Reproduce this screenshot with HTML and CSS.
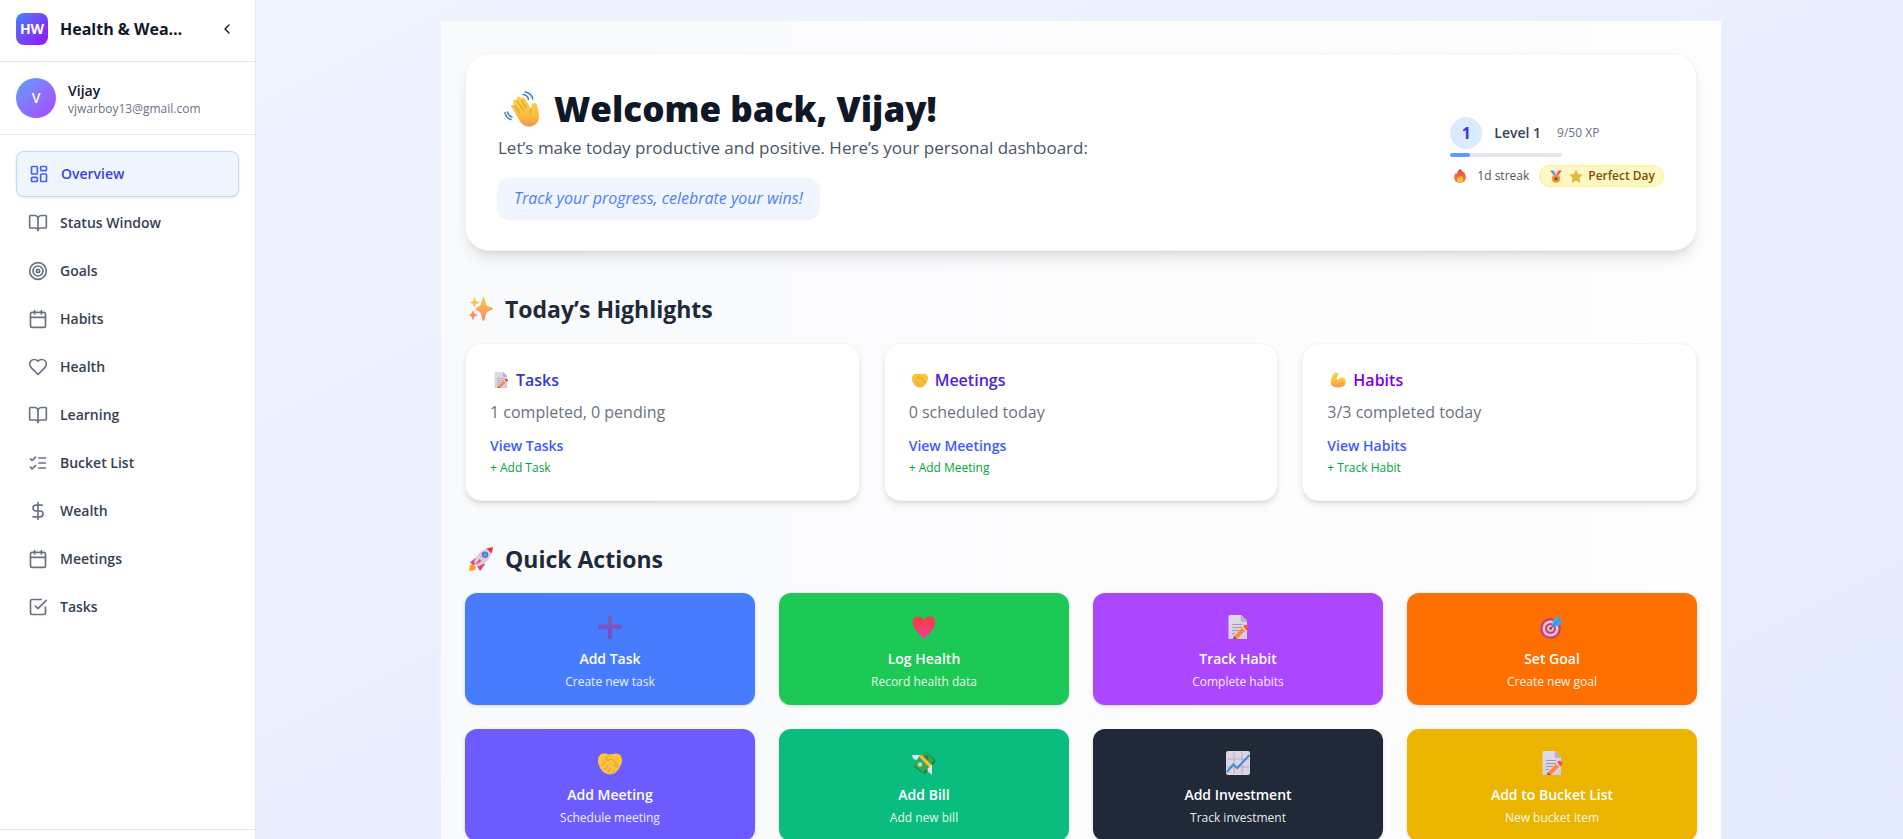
FILE: index.html
```
<!DOCTYPE html>
<html lang="en">
<head>
  <meta charset="UTF-8">
  <meta name="viewport" content="width=device-width, initial-scale=1.0">
  <title>Health &amp; Wealth</title>
  <link rel="stylesheet" href="styles.css">
</head>
<body>
  <!-- Shared icons -->
  <svg class="sprite" aria-hidden="true">
    <defs>
      <linearGradient id="gold" x1="0" y1="0" x2="0" y2="1">
        <stop offset="0" stop-color="#ffd24a"/>
        <stop offset="0.65" stop-color="#f9bd3c"/>
        <stop offset="1" stop-color="#f0935a"/>
      </linearGradient>
      <linearGradient id="shake" x1="0" y1="0" x2="0" y2="1">
        <stop offset="0" stop-color="#ffc72e"/>
        <stop offset="1" stop-color="#f5bd55"/>
      </linearGradient>
      <linearGradient id="spark" x1="0" y1="0" x2="0" y2="1">
        <stop offset="0" stop-color="#fbc94a"/>
        <stop offset="1" stop-color="#fa8a6c"/>
      </linearGradient>
      <linearGradient id="paper" x1="0" y1="0" x2="0" y2="1">
        <stop offset="0" stop-color="#e0dbe6"/>
        <stop offset="1" stop-color="#d9cbe0"/>
      </linearGradient>
      <linearGradient id="love" x1="0" y1="0" x2="0" y2="1">
        <stop offset="0" stop-color="#f2403f"/>
        <stop offset="0.5" stop-color="#f63d68"/>
        <stop offset="1" stop-color="#ee3fae"/>
      </linearGradient>
      <linearGradient id="cross" x1="0" y1="0" x2="0" y2="1">
        <stop offset="0" stop-color="#7663b4"/>
        <stop offset="1" stop-color="#7b46c4"/>
      </linearGradient>
      <linearGradient id="flame" x1="0" y1="0" x2="0" y2="1">
        <stop offset="0" stop-color="#e2483f"/>
        <stop offset="1" stop-color="#fb8a3c"/>
      </linearGradient>
    </defs>

    <symbol id="i-overview" viewBox="0 0 24 24"><rect width="7" height="9" x="3" y="3" rx="1"/><rect width="7" height="5" x="14" y="3" rx="1"/><rect width="7" height="9" x="14" y="12" rx="1"/><rect width="7" height="5" x="3" y="16" rx="1"/></symbol>
    <symbol id="i-book" viewBox="0 0 24 24"><path d="M12 7v14"/><path d="M3 18a1 1 0 0 1-1-1V4a1 1 0 0 1 1-1h5a4 4 0 0 1 4 4 4 4 0 0 1 4-4h5a1 1 0 0 1 1 1v13a1 1 0 0 1-1 1h-6a3 3 0 0 0-3 3 3 3 0 0 0-3-3z"/></symbol>
    <symbol id="i-target" viewBox="0 0 24 24"><circle cx="12" cy="12" r="10"/><circle cx="12" cy="12" r="6"/><circle cx="12" cy="12" r="2"/></symbol>
    <symbol id="i-calendar" viewBox="0 0 24 24"><path d="M8 2v4"/><path d="M16 2v4"/><rect width="18" height="18" x="3" y="4" rx="2"/><path d="M3 10h18"/></symbol>
    <symbol id="i-heart" viewBox="0 0 24 24"><path d="M19 14c1.49-1.46 3-3.21 3-5.5A5.5 5.5 0 0 0 16.5 3c-1.76 0-3 .5-4.5 2-1.5-1.5-2.74-2-4.5-2A5.5 5.5 0 0 0 2 8.5c0 2.3 1.5 4.05 3 5.5l7 7Z"/></symbol>
    <symbol id="i-checks" viewBox="0 0 24 24"><path d="m3 17 2 2 4-4"/><path d="m3 7 2 2 4-4"/><path d="M13 6h8"/><path d="M13 12h8"/><path d="M13 18h8"/></symbol>
    <symbol id="i-dollar" viewBox="0 0 24 24"><path d="M12 2v20"/><path d="M17 5H9.500a3.500 3.500 0 0 0 0 7h5a3.500 3.500 0 0 1 0 7H6"/></symbol>
    <symbol id="i-task" viewBox="0 0 24 24"><path d="m9 11 3 3L22 4"/><path d="M21 12v7a2 2 0 0 1-2 2H5a2 2 0 0 1-2-2V5a2 2 0 0 1 2-2h11"/></symbol>
    <symbol id="i-left" viewBox="0 0 24 24"><path d="m15 18-6-6 6-6"/></symbol>

    <symbol id="e-wave" viewBox="0 0 36 36">
      <g fill="none" stroke="#3f7fc4" stroke-width="1.500" stroke-linecap="round">
        <path d="M19 3.500c3 .3 5 2.200 5.500 5"/><path d="M21 1c4.200.6 7 3.200 7.800 7"/>
        <path d="M3.500 21c.5 2.600 2 4.400 4.500 5"/><path d="M1 21.500c.4 3.600 2.600 6 6 7"/>
      </g>
      <path fill="url(#gold)" d="M10 20 7.500 16.500c-1.300-2 1.200-3.800 2.700-2.200L9.300 11c-.6-2.500 2.200-3.600 3.400-1.500L12.800 8c-.3-2.700 2.600-3.400 3.800-1.300l.8 1.200c.5-2.200 3-2.200 4 0L27 18l.6-3.500c.4-3 4.600-3.400 5.300-.6.800 3.500 2.300 7.500 2.100 12-.2 5.500-4.500 9.600-10 9.600-4.500 0-7.500-2.500-9.500-6z"/>
      <path fill="none" stroke="#dc9434" stroke-width="1" stroke-linecap="round" d="m10.500 14.500 5 7M12.800 9.500l6.200 9.500M17.400 8.500l5 8.500M27 18l-.5 4"/>
    </symbol>
    <symbol id="e-sparkles" viewBox="0 0 24 24">
      <path fill="url(#spark)" d="M14.500 0c1.400 0 2 7.400 3.500 8.600s6 1.700 6 3.200-4.500 1.900-6 3.400-2.100 8.800-3.500 8.800-2-7.300-3.500-8.800-4.500-1.900-4.500-3.200 3-2 4.500-3.200S13.100 0 14.500 0z"/>
      <path fill="#fbbd55" d="M5.500 0 6.900 3.900 11 5.500 6.900 7.100 5.500 11 4.100 7.100 1 5.500l3.100-1.600z"/>
      <path fill="#fa8d68" d="m4 13 1.500 3.500L9 18l-3.500 1.500L4 23.500l-1.500-4L0 18l2.500-1.500z"/>
    </symbol>
    <symbol id="e-memo" viewBox="0 0 24 24">
      <path fill="url(#paper)" d="M2.500 1.500Q2.500 0 4 0h11L21 5.500V24H2.500z"/>
      <path fill="#b9b0c5" d="M15 0 21 5.500V7h-5L14.500 5z"/>
      <path stroke="#a59bb0" stroke-width="1" d="M6 9.500h10M6 12.500h10M6 15.500h7M6 18.500h3"/>
      <path fill="#ff8740" d="m8 21.500 9-9.800 3.200 3L11 24H8z"/>
      <path fill="#e5dde6" d="m15.800 12.700 1.800-2 3.400 3-1.800 2z"/>
      <path fill="#f0593e" d="m17.200 11.200 1.300-1.500q4 0 4 3.300l-2 2.500z"/>
      <path fill="#705866" d="M7 24l1-3 2.500 3z"/>
    </symbol>
    <symbol id="e-handshake" viewBox="0 0 24 24">
      <path fill="url(#shake)" d="M0 10C0 5 2.500 2.500 6 2.500c2.500 0 4 .8 6 .8s4-1 6.500-.8C22.500 2.800 24 6 24 9.500c0 3-1.300 4.700-2.500 7-2 4-5.500 7-9.500 7s-8-3-9.500-6C1.300 15 0 13 0 10z"/>
      <path fill="none" stroke="#d5962a" stroke-width="1" stroke-linecap="round" d="M12 3.300C9.500 4 8 7 8.500 8.700c1.500 1.500 4-.7 5.500-.4l7 7M3.500 15l3-3M6.500 18.500l3.500-4M10 21l3-3.500M14 22l1.500-2M16 13.500l3.500 3.500"/>
    </symbol>
    <symbol id="e-muscle" viewBox="0 0 24 24">
      <path fill="url(#gold)" d="M7.500 1c2-1 5 .3 5.200 2.300.2 2-2 3.700-3 4.200l1 5.500c3-4.500 7.500-6.500 10.500-3.500 3.500 3.500 3 9.500-.5 11.500-5 3-13.500 2.500-17 0C0 19 1 13.500 2.300 9.500 3.200 6 5 2 7.500 1z"/>
      <path fill="none" stroke="#dc9434" stroke-width="1" stroke-linecap="round" d="M9.700 7.500 7.500 6M10.700 13c-.8 1.500-2.300 2.500-4 2.300M14 17c2.500 1.500 5 1 6.500-1"/>
    </symbol>
    <symbol id="e-rocket" viewBox="0 0 24 24">
      <path fill="#fb9c2f" d="m0 24 1-6 3-1 3 3-1 3z"/>
      <path fill="#ea3e70" d="M1 15.500 7.500 10l4.500 3.500L4.500 18zM8 19l5-5 3 3.500-5 6.500z"/>
      <path fill="#d8cde2" d="M5 15.500C6.500 8.500 12 3 19 1l4 4c-2 7-7.500 12.500-14 14.500z"/>
      <path fill="#e23c43" d="M17.500 1.500Q23 0 24 .2q.2 1-1.500 6.300z"/>
      <circle cx="16" cy="7.700" r="3.300" fill="#726caa"/>
      <circle cx="16" cy="7.700" r="2.300" fill="#4e9be8"/>
      <path fill="#f1417c" d="m5.500 18.500 5-6.500 2 2z"/>
    </symbol>
    <symbol id="e-plus" viewBox="0 0 24 24">
      <path fill="url(#cross)" d="M9.800 1.800Q9.800 0 12 0t2.200 1.800v8h8q1.800 0 1.800 2.200t-1.800 2.200h-8v8Q14.200 24 12 24t-2.200-1.800v-8h-8Q0 14.200 0 12t1.800-2.200h8z"/>
      <path fill="none" stroke="#8d4fe0" stroke-width="1" d="M1 13.600h8.800M14.200 13.600H23"/>
    </symbol>
    <symbol id="e-heart" viewBox="0 0 24 24">
      <path fill="url(#love)" d="M12 23.500Q8 21 4 15.500C-1 9-.5 2 5.500 1.500 8.500 1.300 11 3 12 5c1-2 3.500-3.700 6.500-3.500C24.500 2 25 9 20 15.500Q16 21 12 23.500z"/>
    </symbol>
    <symbol id="e-dart" viewBox="0 0 24 24">
      <circle cx="10.500" cy="13.500" r="10.500" fill="#cf3f6e"/>
      <circle cx="10.500" cy="13.500" r="8" fill="#dccbe0"/>
      <circle cx="10.500" cy="13.500" r="5.500" fill="#db3f68"/>
      <circle cx="10.500" cy="13.500" r="3.200" fill="#dccbe0"/>
      <circle cx="10.500" cy="13.500" r="1.500" fill="#c53f66"/>
      <path stroke="#2b6eb8" stroke-width="1.300" d="m10.500 13.500 5-5"/>
      <path fill="#42a5ec" d="m12 11 1-5.500L18 0l1.500 4.500L24 6l-5.500 5z"/>
      <path stroke="#2b83d0" stroke-width="1" d="m13.500 10 6-5.500"/>
    </symbol>
    <symbol id="e-money" viewBox="0 0 24 24">
      <path fill="#e4e2ea" d="M0 4.500 8 4 4.500 9 1.500 8zM14 18l6-5v10.500L17.500 22z"/>
      <path fill="#1b7a3a" d="m1.500 15.500 12-15.500L24 10 12.500 23z"/>
      <path fill="#35aa52" d="m1.500 14 12-14L22 9.500 11.500 21.500z"/>
      <circle cx="14" cy="6.500" r="2.500" fill="#1d8c42"/>
      <circle cx="8" cy="13.500" r="2.300" fill="#b7e2bc"/>
      <path fill="#fbbd35" d="m7.500 6 2-2.500L20 14.500l-2 2.500z"/>
      <path fill="#e4e2ea" d="M0 4.500 8 4 4.500 9zM15 18l5-5v10.500z"/>
    </symbol>
    <symbol id="e-chart" viewBox="0 0 24 24">
      <rect width="24" height="24" rx="2" fill="#ded3e4"/>
      <path stroke="#b7acc3" stroke-width="1" d="M8 1v22M16 1v22M1 8h22M1 16h22"/>
      <path fill="none" stroke="#3d8fd9" stroke-width="2" d="m.8 21 6.500-7.500 4 3.500L23.500 4"/>
    </symbol>
    <symbol id="e-fire" viewBox="0 0 24 24">
      <path fill="url(#flame)" d="M12 0c3 1.500 4.500 3.500 5 6l1.500-1.500C21 8 22.500 12 22 16c-.6 5-4.500 8-10 8S2.500 21 2 16c-.3-3.500 1-6.500 3-9l1.500 2C7 5 9 2 12 0z"/>
      <path fill="#ffc23d" d="M13 11c3 2.500 5 5 4.500 8-.4 2.600-2.500 4-5.200 4S7.500 21.500 7.200 19c-.2-2 .8-3.500 2-4.700l1.500 1.500C11 14 11.700 12.500 13 11z"/>
    </symbol>
    <symbol id="e-medal" viewBox="0 0 24 24">
      <path fill="#4d8fe0" d="M1 1h6l6 9-3 2z"/><path fill="#e64677" d="M23 1h-6l-6 9 3 2z"/><path fill="#d8cfe5" d="M7 1h3l3.500 6-1.500 2zM14 1h3l-5 8-1.500-2z"/>
      <circle cx="12" cy="16" r="8" fill="#f09a3e"/><circle cx="12" cy="16" r="4" fill="#c8702d"/><circle cx="12" cy="16" r="1.800" fill="#6b3a1d"/>
    </symbol>
    <symbol id="e-star" viewBox="0 0 24 24">
      <path fill="#e3b93a" stroke="#e3b93a" stroke-width="2" stroke-linejoin="round" d="m12 1.500 3.300 6.800 7.200 1-5.300 5.200 1.300 7.500-6.500-3.500L5.500 22l1.300-7.500L1.500 9.300l7.200-1z"/>
    </symbol>
  </svg>

  <div class="layout">
    <aside class="sidebar">
      <div class="brand">
        <div class="logo">HW</div>
        <div class="brand-name">Health &amp; Wea…</div>
        <button class="collapse" type="button" aria-label="Collapse sidebar"><svg class="icon"><use href="#i-left"/></svg></button>
      </div>

      <div class="profile">
        <div class="avatar">V</div>
        <div>
          <div class="profile-name">Vijay</div>
          <div class="profile-email">vjwarboy13@gmail.com</div>
        </div>
      </div>

      <nav class="nav">
        <a class="nav-link active" href="#overview"><svg class="icon"><use href="#i-overview"/></svg>Overview</a>
        <a class="nav-link" href="#status"><svg class="icon"><use href="#i-book"/></svg>Status Window</a>
        <a class="nav-link" href="#goals"><svg class="icon"><use href="#i-target"/></svg>Goals</a>
        <a class="nav-link" href="#habits"><svg class="icon"><use href="#i-calendar"/></svg>Habits</a>
        <a class="nav-link" href="#health"><svg class="icon"><use href="#i-heart"/></svg>Health</a>
        <a class="nav-link" href="#learning"><svg class="icon"><use href="#i-book"/></svg>Learning</a>
        <a class="nav-link" href="#bucket-list"><svg class="icon"><use href="#i-checks"/></svg>Bucket List</a>
        <a class="nav-link" href="#wealth"><svg class="icon"><use href="#i-dollar"/></svg>Wealth</a>
        <a class="nav-link" href="#meetings"><svg class="icon"><use href="#i-calendar"/></svg>Meetings</a>
        <a class="nav-link" href="#tasks"><svg class="icon"><use href="#i-task"/></svg>Tasks</a>
      </nav>

      <div class="sidebar-footer"></div>
    </aside>

    <main class="main">
      <div class="panel">
        <section class="hero">
          <div>
            <h1><span class="emoji"><svg><use href="#e-wave"/></svg></span>Welcome back, Vijay!</h1>
            <p class="subtitle">Let’s make today productive and positive. Here’s your personal dashboard:</p>
            <p class="quote">Track your progress, celebrate your wins!</p>
          </div>
          <div class="stats">
            <div class="level">
              <span class="level-badge">1</span>
              <span class="level-name">Level 1</span>
              <span class="level-xp">9/50 XP</span>
            </div>
            <div class="xp-bar"><div class="xp-fill" style="width: 18%"></div></div>
            <div class="streak">
              <svg class="fire"><use href="#e-fire"/></svg>
              <span class="streak-text">1d streak</span>
              <span class="pill"><svg><use href="#e-medal"/></svg><svg><use href="#e-star"/></svg>Perfect Day</span>
            </div>
          </div>
        </section>

        <section class="section">
          <h2><span class="emoji"><svg><use href="#e-sparkles"/></svg></span>Today’s Highlights</h2>
          <div class="highlights">
            <article class="card">
              <h3 class="title-tasks"><span class="emoji"><svg><use href="#e-memo"/></svg></span>Tasks</h3>
              <p>1 completed, 0 pending</p>
              <a class="view" href="#tasks">View Tasks</a>
              <button class="add" type="button">+ Add Task</button>
            </article>
            <article class="card">
              <h3 class="title-meetings"><span class="emoji"><svg><use href="#e-handshake"/></svg></span>Meetings</h3>
              <p>0 scheduled today</p>
              <a class="view" href="#meetings">View Meetings</a>
              <button class="add" type="button">+ Add Meeting</button>
            </article>
            <article class="card">
              <h3 class="title-habits"><span class="emoji"><svg><use href="#e-muscle"/></svg></span>Habits</h3>
              <p>3/3 completed today</p>
              <a class="view" href="#habits">View Habits</a>
              <button class="add" type="button">+ Track Habit</button>
            </article>
          </div>
        </section>

        <section class="section">
          <h2><span class="emoji"><svg><use href="#e-rocket"/></svg></span>Quick Actions</h2>
          <div class="actions">
            <button class="action blue" type="button"><svg><use href="#e-plus"/></svg><span class="action-title">Add Task</span><span class="action-text">Create new task</span></button>
            <button class="action green" type="button"><svg><use href="#e-heart"/></svg><span class="action-title">Log Health</span><span class="action-text">Record health data</span></button>
            <button class="action purple" type="button"><svg><use href="#e-memo"/></svg><span class="action-title">Track Habit</span><span class="action-text">Complete habits</span></button>
            <button class="action orange" type="button"><svg><use href="#e-dart"/></svg><span class="action-title">Set Goal</span><span class="action-text">Create new goal</span></button>
            <button class="action indigo" type="button"><svg><use href="#e-handshake"/></svg><span class="action-title">Add Meeting</span><span class="action-text">Schedule meeting</span></button>
            <button class="action emerald" type="button"><svg><use href="#e-money"/></svg><span class="action-title">Add Bill</span><span class="action-text">Add new bill</span></button>
            <button class="action dark" type="button"><svg><use href="#e-chart"/></svg><span class="action-title">Add Investment</span><span class="action-text">Track investment</span></button>
            <button class="action yellow" type="button"><svg><use href="#e-memo"/></svg><span class="action-title">Add to Bucket List</span><span class="action-text">New bucket item</span></button>
          </div>
        </section>
      </div>
    </main>
  </div>
</body>
</html>
```
FILE: styles.css
```
* {
  box-sizing: border-box;
}

body {
  margin: 0;
  font-family: "Segoe UI", "Open Sans", sans-serif;
  font-size: 16px;
  line-height: 24px;
  color: #101828;
}

h1, h2, h3, p {
  margin: 0;
}

a {
  text-decoration: none;
}

button {
  font-family: inherit;
  border: none;
  background: none;
  cursor: pointer;
}

svg {
  display: block;
  flex-shrink: 0;
}

.sprite {
  position: absolute;
  width: 0;
  height: 0;
}

.icon {
  width: 20px;
  height: 20px;
  fill: none;
  stroke: currentColor;
  stroke-width: 2;
  stroke-linecap: round;
  stroke-linejoin: round;
}

.layout {
  display: flex;
  height: 100vh;
}

/* Sidebar */
.sidebar {
  display: flex;
  flex-direction: column;
  flex-shrink: 0;
  width: 256px;
  background: #fff;
  border-right: 1px solid #e5e7eb;
}

.brand {
  display: flex;
  align-items: center;
  gap: 12px;
  padding: 13px 16px 16px;
  border-bottom: 1px solid #e5e7eb;
}

.logo {
  width: 32px;
  height: 32px;
  border-radius: 8px;
  background: linear-gradient(to bottom right, #4a80ff, #9810fa);
  color: #fff;
  font-size: 14px;
  font-weight: 700;
  line-height: 32px;
  text-align: center;
}

.brand-name {
  flex: 1;
  font-weight: 700;
  white-space: nowrap;
}

.collapse {
  padding: 4px;
  color: #101828;
}

.collapse .icon {
  width: 16px;
  height: 16px;
}

.profile {
  display: flex;
  align-items: center;
  gap: 12px;
  padding: 16px;
  border-bottom: 1px solid #e5e7eb;
}

.avatar {
  width: 40px;
  height: 40px;
  border-radius: 50%;
  background: linear-gradient(to bottom right, #60a0ff, #ad46ff);
  color: #fff;
  font-size: 14px;
  font-weight: 600;
  line-height: 40px;
  text-align: center;
}

.profile-name {
  padding-top: 1px;
  font-size: 14px;
  font-weight: 600;
  line-height: 20px;
}

.profile-email {
  font-size: 12px;
  line-height: 16px;
  color: #6a7282;
}

.nav {
  display: flex;
  flex: 1;
  flex-direction: column;
  gap: 4px;
  padding: 16px;
}

.nav-link {
  display: flex;
  align-items: center;
  gap: 12px;
  padding: 12px;
  border-radius: 8px;
  color: #364153;
  font-size: 14px;
  font-weight: 600;
  line-height: 20px;
}

.nav-link .icon {
  color: #6a7282;
}

.nav-link.active {
  border: 1px solid #bedbff;
  background: #eff6ff;
  color: #4040e0;
  box-shadow: 0 1px 3px rgba(0, 0, 0, 0.1);
}

.nav-link.active .icon {
  color: #4560ff;
}

.sidebar-footer {
  height: 10px;
  border-top: 1px solid #e5e7eb;
}

/* Main */
.main {
  flex: 1;
  padding: 21px 16px 32px 19px;
  overflow-y: auto;
  scrollbar-width: none;
  background: linear-gradient(to bottom right, #eff4ff, #e4eafe);
}

.panel {
  max-width: 1280px;
  margin: 0 auto;
  padding: 32px 24px;
  background: linear-gradient(to right, #f9fafc, #fdfdfd);
}

.hero {
  display: flex;
  align-items: center;
  justify-content: space-between;
  gap: 32px;
  padding: 32px;
  border: 1px solid #f3f4f6;
  border-radius: 24px;
  background: #fff;
  box-shadow: 0 10px 15px -3px rgba(0, 0, 0, 0.1), 0 4px 6px -4px rgba(0, 0, 0, 0.1);
}

.emoji {
  display: flex;
  justify-content: center;
}

h1 {
  display: flex;
  align-items: center;
  gap: 8px;
  margin-bottom: 2px;
  font-size: 35px;
  font-weight: 800;
  line-height: 46px;
}

h1 .emoji {
  width: 48px;
}

h1 svg {
  width: 36px;
  height: 36px;
}

.subtitle {
  color: #4a5565;
  font-size: 17px;
  line-height: 28px;
}

.quote {
  width: fit-content;
  margin-top: 16px;
  padding: 8px 16px;
  border-radius: 12px;
  background: #eff6ff;
  color: #507cff;
  font-style: italic;
  box-shadow: 0 1px 3px rgba(0, 0, 0, 0.1);
}

.level {
  display: flex;
  align-items: center;
  gap: 12px;
}

.level-badge {
  width: 32px;
  height: 32px;
  border-radius: 50%;
  background: #dbeafe;
  color: #3b35e0;
  font-weight: 700;
  line-height: 32px;
  text-align: center;
}

.level-name {
  color: #364153;
  font-size: 14px;
  font-weight: 600;
}

.level-xp {
  margin-left: 4px;
  color: #6a7282;
  font-size: 12px;
}

.xp-bar {
  width: 112px;
  height: 4px;
  margin: 4px 0 8px;
  border-radius: 2px;
  background: #e5e7eb;
}

.xp-fill {
  height: 4px;
  border-radius: 2px;
  background: #5c9bff;
}

.streak {
  display: flex;
  align-items: center;
  font-size: 12px;
  line-height: 16px;
}

.fire {
  width: 14px;
  height: 14px;
  margin: 0 10px 0 3px;
}

.streak-text {
  margin-right: 10px;
  color: #4a5565;
}

.pill {
  display: flex;
  align-items: center;
  gap: 4px;
  padding: 2px 8px;
  border: 1px solid #fff085;
  border-radius: 11px;
  background: #fef9c2;
  color: #894b00;
  font-weight: 600;
}

.pill svg {
  width: 16px;
  height: 13px;
}

.section {
  margin-top: 40px;
}

h2 {
  display: flex;
  align-items: center;
  gap: 8px;
  margin-bottom: 16px;
  color: #1e2939;
  font-size: 23px;
  font-weight: 700;
  line-height: 36px;
}

h2 .emoji {
  width: 32px;
}

h2 svg {
  width: 24px;
  height: 24px;
}

.highlights {
  display: grid;
  grid-template-columns: repeat(3, 1fr);
  gap: 24px;
}

.card {
  display: flex;
  flex-direction: column;
  align-items: flex-start;
  padding: 24px;
  border: 1px solid #f3f4f6;
  border-radius: 16px;
  background: #fff;
  box-shadow: 0 4px 6px -1px rgba(0, 0, 0, 0.1), 0 2px 4px -2px rgba(0, 0, 0, 0.1);
}

h3 {
  display: flex;
  align-items: center;
  gap: 4px;
  margin-bottom: 8px;
  font-size: 16px;
  font-weight: 600;
  line-height: 24px;
}

h3 .emoji {
  width: 22px;
}

h3 svg {
  width: 16px;
  height: 16px;
}

.title-tasks {
  color: #3538cd;
}

.title-meetings {
  color: #5022d6;
}

.title-habits {
  color: #8200db;
}

.card p {
  margin-bottom: 12px;
  color: #6a7282;
}

.view {
  margin-bottom: 4px;
  color: #3d5afe;
  font-size: 14px;
  font-weight: 600;
  line-height: 20px;
}

.add {
  padding: 0;
  color: #00a63e;
  font-size: 12px;
  line-height: 16px;
}

.actions {
  display: grid;
  grid-template-columns: repeat(4, 1fr);
  gap: 24px;
}

.action {
  display: flex;
  flex-direction: column;
  align-items: center;
  padding: 22px 16px 15px;
  border-radius: 12px;
  color: #fff;
  box-shadow: 0 1px 3px rgba(0, 0, 0, 0.15);
}

.action svg {
  width: 24px;
  height: 24px;
  margin-bottom: 10px;
}

.action-title {
  margin-bottom: 5px;
  font-size: 14px;
  font-weight: 600;
  line-height: 20px;
}

.action-text {
  font-size: 12px;
  line-height: 16px;
  opacity: 0.9;
}

.blue {
  background: #487cff;
}

.green {
  background: #1dc955;
}

.purple {
  background: #ad46ff;
}

.orange {
  background: #ff7000;
}

.indigo {
  background: #6c5cff;
}

.emerald {
  background: #0bbc7f;
}

.dark {
  background: #1f2937;
}

.yellow {
  background: #ebb400;
}
```
